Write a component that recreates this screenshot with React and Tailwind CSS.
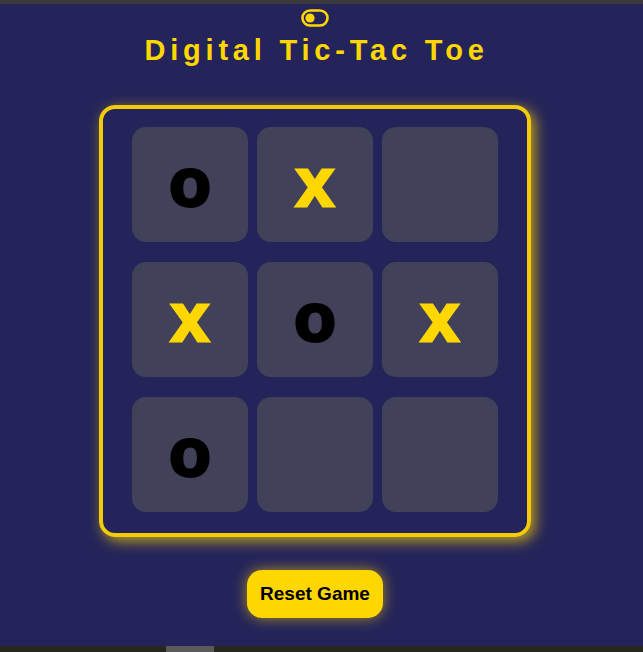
import React, { useState } from 'react';

const START = ['o', 'x', '', 'x', 'o', 'x', 'o', '', ''];

export default function App() {
  const [cells, setCells] = useState(START);

  const reset = () => setCells(Array(9).fill(''));

  return (
    <div className="w-[643px] h-[652px] flex flex-col bg-[#25245a] font-['Liberation_Sans',Arial,sans-serif] overflow-hidden">
      {/* window strip */}
      <div className="h-[4px] bg-[#3a3a3a]" />

      <div className="flex-1 flex flex-col items-center pr-[13px]">
        {/* theme toggle */}
        <button className="mt-[5px] text-[#ffd700]">
          <svg width="28" height="18" viewBox="0 0 28 18" fill="none">
            <rect x="1.5" y="1.5" width="25" height="15" rx="7.5" stroke="currentColor" strokeWidth="2.6" />
            <circle cx="9" cy="9" r="4.6" fill="currentColor" />
          </svg>
        </button>

        <h1 className="mt-[6px] pl-[3px] text-[29px] leading-[34px] font-bold tracking-[4.8px] text-[#ffd700]">
          Digital Tic-Tac Toe
        </h1>

        {/* board */}
        <div className="mt-[38px] w-[432px] h-[432px] border-4 border-[#f2cc08] rounded-[16px] shadow-[4px_4px_14px_rgba(255,215,0,0.7)] pt-[18px] pl-[28px]">
          <div className="ml-px grid grid-cols-[116px_116px_116px] grid-rows-[115px_115px_115px] gap-x-[9px] gap-y-[20px]">
            {cells.map((v, i) => (
              <button
                key={i}
                onClick={() => {
                  if (v) return;
                  const next = [...cells];
                  next[i] = next.filter(Boolean).length % 2 ? 'o' : 'x';
                  setCells(next);
                }}
                className={`rounded-[14px] bg-[#42415a] flex items-center justify-center font-bold text-[68px] leading-none pb-[6px] [-webkit-text-stroke:3px_currentColor] ${
                  v === 'x' ? 'text-[#ffd700]' : 'text-black'
                }`}
              >
                {v}
              </button>
            ))}
          </div>
        </div>

        <button
          onClick={reset}
          className="mt-[33px] h-[48px] px-[13px] rounded-[15px] bg-[#ffd700] text-black font-bold text-[19px] shadow-[0_0_14px_rgba(255,215,0,0.6)]"
        >
          Reset Game
        </button>
      </div>

      {/* scrollbar strip */}
      <div className="h-[6px] bg-[#262820] flex">
        <div className="ml-[166px] w-[48px] bg-[#5a5a5a]" />
      </div>
    </div>
  );
}
